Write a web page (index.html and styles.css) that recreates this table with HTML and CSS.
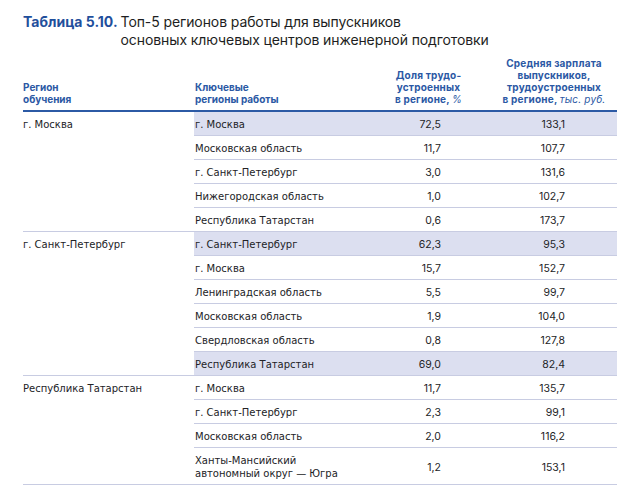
FILE: index.html
```html
<!DOCTYPE html>
<html lang="ru">
<head>
<meta charset="utf-8">
<link rel="stylesheet" href="styles.css">
</head>
<body>
<div class="page">
  <div class="title">
    <span class="title-label">Таблица 5.10.</span>
    <span class="title-text">Топ-5 регионов работы для выпускников<br>основных ключевых центров инженерной подготовки</span>
  </div>
  <table class="tbl">
    <colgroup>
      <col class="c1"><col class="c2"><col class="c3"><col class="c4">
    </colgroup>
    <thead>
      <tr>
        <th class="h-left">Регион<br>обучения</th>
        <th class="h-left h-key">Ключевые<br>регионы работы</th>
        <th class="h-center">Доля трудо-<br>устроенных<br>в регионе, <i>%</i></th>
        <th class="h-center">Средняя зарплата<br>выпускников,<br>трудоустроенных<br>в регионе, <i>тыс. руб.</i></th>
      </tr>
    </thead>
    <tbody>
      <tr class="hl">
        <td class="src" rowspan="5">г. Москва</td>
        <td class="reg">г. Москва</td><td class="num n3">72,5</td><td class="num n4">133,1</td>
      </tr>
      <tr><td class="reg">Московская область</td><td class="num n3">11,7</td><td class="num n4">107,7</td></tr>
      <tr><td class="reg">г. Санкт-Петербург</td><td class="num n3">3,0</td><td class="num n4">131,6</td></tr>
      <tr><td class="reg">Нижегородская область</td><td class="num n3">1,0</td><td class="num n4">102,7</td></tr>
      <tr class="grp-end"><td class="reg">Республика Татарстан</td><td class="num n3">0,6</td><td class="num n4">173,7</td></tr>

      <tr class="hl">
        <td class="src" rowspan="6">г. Санкт-Петербург</td>
        <td class="reg">г. Санкт-Петербург</td><td class="num n3">62,3</td><td class="num n4">95,3</td>
      </tr>
      <tr><td class="reg">г. Москва</td><td class="num n3">15,7</td><td class="num n4">152,7</td></tr>
      <tr><td class="reg">Ленинградская область</td><td class="num n3">5,5</td><td class="num n4">99,7</td></tr>
      <tr><td class="reg">Московская область</td><td class="num n3">1,9</td><td class="num n4">104,0</td></tr>
      <tr><td class="reg">Свердловская область</td><td class="num n3">0,8</td><td class="num n4">127,8</td></tr>
      <tr class="hl grp-end"><td class="reg">Республика Татарстан</td><td class="num n3">69,0</td><td class="num n4">82,4</td></tr>

      <tr>
        <td class="src" rowspan="4">Республика Татарстан</td>
        <td class="reg">г. Москва</td><td class="num n3">11,7</td><td class="num n4">135,7</td>
      </tr>
      <tr><td class="reg">г. Санкт-Петербург</td><td class="num n3">2,3</td><td class="num n4">99,1</td></tr>
      <tr><td class="reg">Московская область</td><td class="num n3">2,0</td><td class="num n4">116,2</td></tr>
      <tr class="grp-end"><td class="reg">Ханты-Мансийский<br>автономный округ — Югра</td><td class="num n3">1,2</td><td class="num n4">153,1</td></tr>
    </tbody>
  </table>
</div>
</body>
</html>
```

FILE: styles.css
```css
html, body {
  margin: 0;
  padding: 0;
  background: #ffffff;
}

body {
  font-family: "Inter", "Noto Sans", sans-serif;
  color: #222326;
}

.page {
  padding: 13px 20px 0 23px;
}

.title {
  display: flex;
  align-items: baseline;
  gap: 3px;
  line-height: 18px;
  font-size: 14px;
  color: #1d1e22;
}

.title-label {
  flex: none;
  font-weight: 700;
  color: #1f4f9c;
}

.title-text {
  letter-spacing: -0.1px;
  white-space: nowrap;
}

.tbl {
  margin-top: 8px;
  width: 594px;
  border-collapse: collapse;
  table-layout: fixed;
}

.c1 { width: 171px; }
.c2 { width: 172px; }
.c3 { width: 125px; }
.c4 { width: 126px; }

thead th {
  font-size: 10px;
  line-height: 12px;
  font-weight: 700;
  color: #2b58a4;
  vertical-align: bottom;
  padding: 0 0 5px 0;
  border-bottom: 2px solid #2c5aa5;
}

thead th i {
  font-weight: 400;
}

.h-left { text-align: left; }
.h-key { padding-left: 1px; }
.h-center { text-align: center; letter-spacing: 0.2px; }

tbody td {
  line-height: 13px;
  padding: 6px 0 4px;
  border-bottom: 1px solid #c8cce2;
}

td.src,
td.reg {
  font-family: "DejaVu Sans", "Noto Sans", sans-serif;
  font-size: 10px;
}

td.src {
  vertical-align: top;
  padding-left: 0;
}

td.reg {
  padding-left: 1px;
  vertical-align: middle;
}

td.num {
  font-size: 10.5px;
  text-align: right;
  vertical-align: middle;
}

td.n3 { padding-right: 50px; }
td.n4 { padding-right: 52px; }

tr.hl td.reg,
tr.hl td.num {
  background: #dcdff0;
}
```
